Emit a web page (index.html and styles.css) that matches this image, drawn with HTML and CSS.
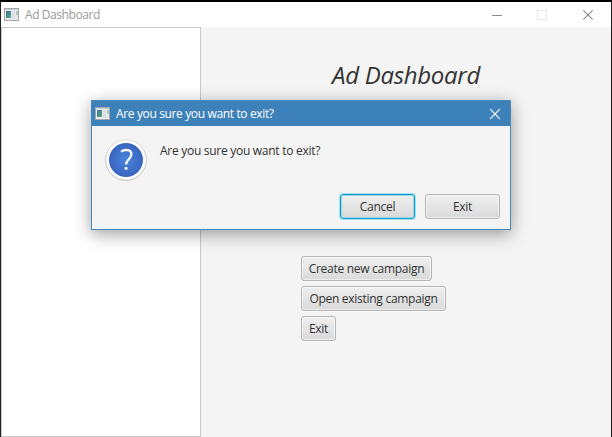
FILE: index.html
```
<!DOCTYPE html>
<html lang="en">
<head>
<meta charset="utf-8">
<title>Ad Dashboard</title>
<link rel="stylesheet" href="styles.css">
</head>
<body>
<svg class="defs" width="0" height="0" aria-hidden="true">
  <defs>
    <linearGradient id="pane" x1="0" y1="0" x2="1" y2="1">
      <stop offset="0" stop-color="#466f9c"/><stop offset="1" stop-color="#4fae78"/>
    </linearGradient>
    <radialGradient id="disc"><stop offset="0" stop-color="#4987dc"/><stop offset="1" stop-color="#3a64bf"/></radialGradient>
    <linearGradient id="ring" x1="0" y1="0" x2="0" y2="1">
      <stop offset="0" stop-color="#d9d9d9"/><stop offset="1" stop-color="#bdbdbd"/>
    </linearGradient>
    <symbol id="app" viewBox="0 0 15 13">
      <rect width="15" height="13" fill="#a2a6ad"/>
      <rect x="1" y="1" width="13" height="11" fill="#e9ebee"/>
      <rect x="1" y="1" width="13" height="1" fill="#c9ced8"/>
      <rect x="2" y="3" width="5" height="7" fill="url(#pane)"/>
      <rect x="8" y="3" width="3" height="8" fill="#dedfe1"/>
      <rect x="12" y="3" width="2" height="4" fill="#a9c9bd"/>
    </symbol>
  </defs>
</svg>
<div class="window">
  <header class="titlebar">
    <svg class="app-icon" width="15" height="13"><use href="#app"/></svg>
    <span class="caption">Ad Dashboard</span>
    <svg class="controls" width="104" height="12" fill="none">
      <path d="M0 6.500h10" stroke="#8c8c8c"/>
      <rect x="45.500" y="1.500" width="9" height="9" stroke="#e6e6e6"/>
      <path d="M91.300 1.300l9.400 9.400M100.700 1.300l-9.400 9.400" stroke="#858585" stroke-width="1.100"/>
    </svg>
  </header>
  <div class="content">
    <aside class="list"></aside>
    <main class="main">
      <h1 class="heading">Ad Dashboard</h1>
      <div class="actions">
        <button class="btn create"><span>Create new campaign</span></button>
        <button class="btn open"><span>Open existing campaign</span></button>
        <button class="btn quit"><span>Exit</span></button>
      </div>
    </main>
  </div>
</div>
<section class="dialog" role="dialog">
  <header class="dialog-title">
    <svg class="app-icon" width="15" height="13"><use href="#app"/></svg>
    <span class="dialog-caption">Are you sure you want to exit?</span>
    <svg class="close" width="12" height="12"><path d="M1.200 1.200l9.600 9.600M10.800 1.200l-9.600 9.600" stroke="#fff" stroke-width="1.200"/></svg>
  </header>
  <div class="dialog-body">
    <div class="message">
      <svg width="42" height="42" viewBox="0 0 42 42">
        <circle cx="21" cy="21" r="20.300" fill="#fff" stroke="url(#ring)"/>
        <circle cx="21" cy="21" r="17" fill="url(#disc)"/>
        <path d="M16 12.700C17.800 11.400 19.600 10.900 21.500 10.900C24.700 11 26.400 12.700 26.400 15.300C26.400 19.900 21 20.500 21 25.600" fill="none" stroke="#fff" stroke-width="2.200"/>
        <rect x="19.600" y="28" width="2.900" height="2.800" rx=".8" fill="#fff"/>
      </svg>
      <span class="question">Are you sure you want to exit?</span>
    </div>
    <div class="buttons">
      <button class="btn focused"><span>Cancel</span></button>
      <button class="btn"><span>Exit</span></button>
    </div>
  </div>
</section>
</body>
</html>
```
FILE: styles.css
```
* { box-sizing: border-box; }
body {
  margin: 0;
  width: 612px;
  height: 437px;
  overflow: hidden;
  font: 12px/16px "Open Sans", "Noto Sans", sans-serif;
  letter-spacing: -0.28px;
  color: #333;
}
.defs { position: absolute; }
.window {
  height: 437px;
  display: flex;
  flex-direction: column;
  border: solid #231f20;
  border-width: 2px 1px 0;
  border-top-color: #000;
  background: #f4f4f4;
}
.titlebar {
  height: 25px;
  display: flex;
  align-items: center;
  padding: 0 15px 0 3px;
  background: #fff;
}
.app-icon { flex: none; }
.caption {
  margin-left: 6px;
  letter-spacing: -0.42px;
  color: #999;
  white-space: nowrap;
}
.controls { margin-left: auto; }
.content { flex: 1; display: flex; }
.list { width: 200px; background: #fff; border: 1px solid #c8c8c8; }
.main { flex: 1; padding: 32px 0 0 100px; }
.heading {
  margin: 0 0 0 31px;
  height: 32px;
  font-size: 24px;
  line-height: 32px;
  font-weight: 400;
  font-style: italic;
  letter-spacing: -0.3px;
  white-space: nowrap;
}
.actions {
  margin-top: 165px;
  display: flex;
  flex-direction: column;
  align-items: flex-start;
  gap: 5px;
}
.btn {
  width: 75px;
  height: 25px;
  padding: 1px 0 0;
  border: 1px solid #b5b5b5;
  border-radius: 3px;
  background: linear-gradient(#f0f0f0, #d9d9d9);
  box-shadow: inset 0 0 0 1px rgba(255, 255, 255, .55), 0 1px 0 #fafafa;
  font: inherit;
  letter-spacing: inherit;
  color: #333;
  white-space: nowrap;
}
.create { width: 131px; }
.open { width: 145px; }
.quit { width: 35px; }
.focused {
  border-color: #039ed3;
  box-shadow: 0 0 0 1px #a9e0f1, inset 0 0 0 1px #a5d5e5;
}
.dialog {
  position: absolute;
  left: 91px;
  top: 100px;
  width: 420px;
  height: 130px;
  display: flex;
  flex-direction: column;
  border: 1px solid #4589bd;
  background: #f4f4f4;
  box-shadow: 0 4px 16px rgba(0, 0, 0, .38);
}
.dialog-title {
  height: 25px;
  display: flex;
  align-items: center;
  padding: 0 9px 0 3px;
  background: #3d81bb;
  color: #fff;
}
.dialog-caption {
  margin-left: 6px;
  letter-spacing: -0.36px;
  white-space: nowrap;
}
.close { margin-left: auto; }
.dialog-body {
  flex: 1;
  display: flex;
  flex-direction: column;
  justify-content: space-between;
  padding: 13px 10px 10px 13px;
}
.message { display: flex; gap: 13px; }
.question { margin-top: 4px; white-space: nowrap; }
.buttons { display: flex; justify-content: flex-end; gap: 10px; }
```
